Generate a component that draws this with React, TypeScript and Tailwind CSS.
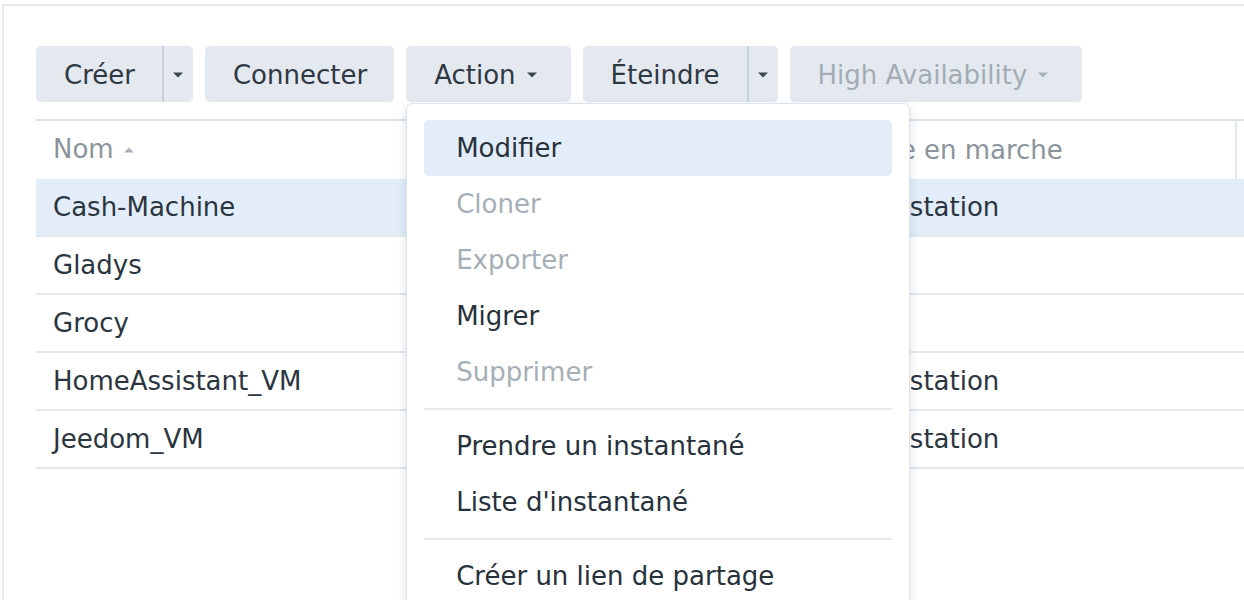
import React from 'react';

const font = { fontFamily: '"DejaVu Sans", Verdana, sans-serif' };

function Caret({ disabled = false, up = false }: { disabled?: boolean; up?: boolean }) {
  return (
    <svg width="12" height="7" viewBox="0 0 12 7" className="shrink-0">
      <path
        d={up ? 'M1 6.5 L6 1.5 L11 6.5 Z' : 'M1 0.5 L11 0.5 L6 5.5 Z'}
        fill={disabled ? '#a9b1b9' : '#3b4550'}
      />
    </svg>
  );
}

function SplitButton({ label }: { label: string }) {
  return (
    <div className="flex h-[56px] items-center rounded-[5px] bg-[#e4e9f0] text-[#2e3843]">
      <span className="pl-[28px] pr-[27px] pt-[2px]">{label}</span>
      <div className="h-full w-[2px] bg-[#c9d2dc]" />
      <div className="flex w-[29px] items-center justify-center pt-[2px]">
        <Caret />
      </div>
    </div>
  );
}

function Button({ label, caret = false, disabled = false }: { label: string; caret?: boolean; disabled?: boolean }) {
  return (
    <div
      className={`flex h-[56px] items-center gap-[10px] rounded-[5px] bg-[#e4e9f0] pl-[28px] pt-[2px] ${
        caret ? 'pr-[33px]' : 'pr-[27px]'
      } ${disabled ? 'text-[#a3abb4]' : 'text-[#2e3843]'}`}
    >
      <span>{label}</span>
      {caret && <Caret disabled={disabled} />}
    </div>
  );
}

const menuItems: ({ label: string; disabled?: boolean; active?: boolean } | 'sep')[] = [
  { label: 'Modifier', active: true },
  { label: 'Cloner', disabled: true },
  { label: 'Exporter', disabled: true },
  { label: 'Migrer' },
  { label: 'Supprimer', disabled: true },
  'sep',
  { label: 'Prendre un instantané' },
  { label: "Liste d'instantané" },
  'sep',
  { label: 'Créer un lien de partage' },
];

function ActionMenu() {
  return (
    <div className="absolute left-0 top-[57px] z-10 w-[504px] rounded-[7px] border border-[#dde3ea] bg-white px-[17px] pt-[16px] pb-[16px] shadow-[0_3px_10px_rgba(60,80,110,0.18)]">
      {menuItems.map((item, i) =>
        item === 'sep' ? (
          <div key={i} className="my-[8px] h-[2px] bg-[#e6eaef]" />
        ) : (
          <div
            key={i}
            className={`flex h-[56px] items-center rounded-[5px] pl-[32px] pt-[1px] ${
              item.active ? 'bg-[#e2edf9]' : ''
            } ${item.disabled ? 'text-[#a6aeb6]' : 'text-[#27313c]'}`}
          >
            {item.label}
          </div>
        )
      )}
    </div>
  );
}

const rows = [
  { name: 'Cash-Machine', host: 'Diskstation', selected: true },
  { name: 'Gladys', host: '' },
  { name: 'Grocy', host: '' },
  { name: 'HomeAssistant_VM', host: 'Diskstation' },
  { name: 'Jeedom_VM', host: 'Diskstation' },
];

export default function App() {
  return (
    <div className="h-[600px] w-[1244px] overflow-hidden bg-white text-[26px]" style={font}>
      <div className="ml-[2px] mt-[4px] h-[600px] border-l-2 border-t-2 border-[#e6eaf0] pl-[32px] pt-[40px]">
        {/* toolbar */}
        <div className="flex gap-[12px]">
          <SplitButton label="Créer" />
          <Button label="Connecter" />
          <div className="relative">
            <Button label="Action" caret />
            <ActionMenu />
          </div>
          <SplitButton label="Éteindre" />
          <Button label="High Availability" caret disabled />
        </div>

        {/* table */}
        <div className="mt-[17px] border-t-2 border-[#d9e1ea]">
          <div className="flex h-[58px] items-center text-[#8b949d]">
            <div className="flex w-[801px] items-center gap-[9px] pl-[17px] pb-[1px]">
              <span>Nom</span>
              <Caret up disabled />
            </div>
            <div className="flex h-full flex-1 items-center pl-[17px]">
              <span className="flex-1">Hôte en marche</span>
              <div className="mr-[7px] h-full w-[2px] bg-[#e3e8ee]" />
            </div>
          </div>
          {rows.map((r) => (
            <div
              key={r.name}
              className={`flex h-[58px] items-center border-b-2 border-[#e3e8ee] text-[#2b3540] ${
                r.selected ? 'bg-[#e2edf9]' : ''
              }`}
            >
              <div className="w-[801px] pl-[17px]">{r.name}</div>
              <div className="flex-1 pl-[17px]">{r.host}</div>
            </div>
          ))}
        </div>
      </div>
    </div>
  );
}
